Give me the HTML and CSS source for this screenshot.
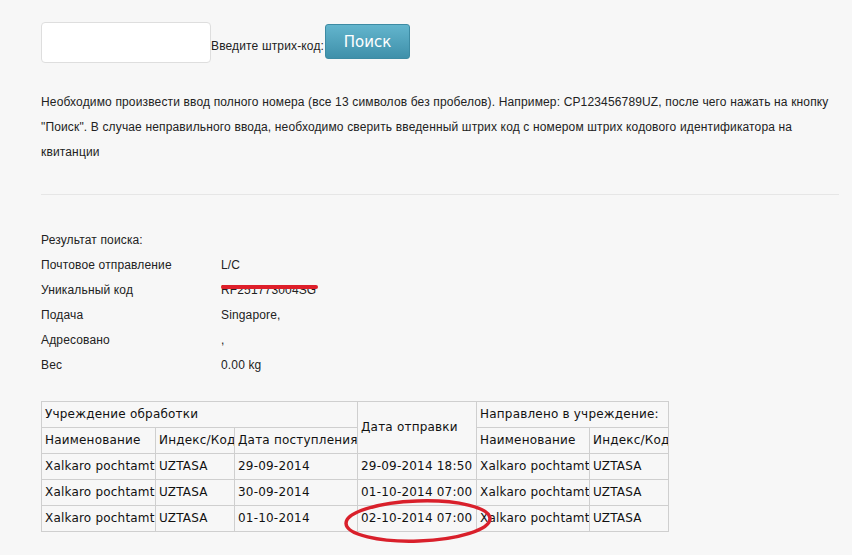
FILE: index.html
```html
<!DOCTYPE html>
<html lang="ru">
<head>
  <meta charset="UTF-8">
  <title>Отслеживание почтовых отправлений</title>
  <link rel="stylesheet" href="styles.css">
</head>
<body>
<div class="page">

  <form class="search-form" onsubmit="return false">
    <input class="barcode-input" type="text">
    <label class="barcode-label">Введите штрих-код:</label>
    <button class="search-btn" type="submit">Поиск</button>
  </form>

  <p class="hint">Необходимо произвести ввод полного номера (все 13 символов без пробелов). Например: CP123456789UZ, после чего нажать на кнопку "Поиск". В случае неправильного ввода, необходимо сверить введенный штрих код с номером штрих кодового идентификатора на квитанции</p>

  <hr class="divider">

  <div class="result">
    <div class="result-title">Результат поиска:</div>
    <div class="result-row">
      <span class="result-label">Почтовое отправление</span>
      <span class="result-value">L/C</span>
    </div>
    <div class="result-row">
      <span class="result-label">Уникальный код</span>
      <span class="result-value marked">RF251773004SG<span class="strike"></span></span>
    </div>
    <div class="result-row">
      <span class="result-label">Подача</span>
      <span class="result-value">Singapore,</span>
    </div>
    <div class="result-row">
      <span class="result-label">Адресовано</span>
      <span class="result-value">,</span>
    </div>
    <div class="result-row">
      <span class="result-label">Вес</span>
      <span class="result-value">0.00 kg</span>
    </div>
  </div>

  <div class="track-wrap">
    <table class="track">
      <colgroup>
        <col class="col-name">
        <col class="col-code">
        <col class="col-date">
        <col class="col-sent">
        <col class="col-name2">
        <col class="col-code">
      </colgroup>
      <tr>
        <td colspan="3">Учреждение обработки</td>
        <td rowspan="2">Дата отправки</td>
        <td colspan="2">Направлено в учреждение:</td>
      </tr>
      <tr>
        <td>Наименование</td>
        <td>Индекс/Код</td>
        <td>Дата поступления</td>
        <td>Наименование</td>
        <td>Индекс/Код</td>
      </tr>
      <tr>
        <td>Xalkaro pochtamt</td>
        <td>UZTASA</td>
        <td>29-09-2014</td>
        <td>29-09-2014 18:50</td>
        <td>Xalkaro pochtamt</td>
        <td>UZTASA</td>
      </tr>
      <tr>
        <td>Xalkaro pochtamt</td>
        <td>UZTASA</td>
        <td>30-09-2014</td>
        <td>01-10-2014 07:00</td>
        <td>Xalkaro pochtamt</td>
        <td>UZTASA</td>
      </tr>
      <tr>
        <td>Xalkaro pochtamt</td>
        <td>UZTASA</td>
        <td>01-10-2014</td>
        <td>02-10-2014 07:00</td>
        <td>Xalkaro pochtamt</td>
        <td>UZTASA</td>
      </tr>
    </table>
    <svg class="circle-mark" width="156" height="50" viewBox="0 0 156 50">
      <ellipse cx="77" cy="24" rx="72" ry="20" transform="rotate(-2 77 24)" fill="none" stroke="#d9202b" stroke-width="3.5"/>
    </svg>
  </div>

</div>
</body>
</html>
```

FILE: styles.css
```css
html, body {
  margin: 0;
  padding: 0;
}

body {
  background-color: #f7f7f7;
  font-family: "Liberation Sans", Arial, sans-serif;
  font-size: 12px;
  letter-spacing: 0.15px;
  color: #222;
}

.page {
  width: 798px;
  padding: 22px 0 0 41px;
}

.search-form {
  display: flex;
  align-items: flex-start;
  height: 41px;
}

.barcode-input {
  box-sizing: border-box;
  width: 170px;
  height: 41px;
  margin: 0;
  border: 1px solid #dedede;
  border-radius: 4px;
  background: #fff;
}

.barcode-label {
  margin: 17px 1px 0 0;
  line-height: 14px;
}

.search-btn {
  box-sizing: border-box;
  width: 85px;
  height: 35px;
  margin-top: 2px;
  border: 1px solid #3d8ba3;
  border-radius: 3px;
  background: linear-gradient(#63b5cd, #3f90aa);
  color: #fff;
  font-family: "DejaVu Sans", Verdana, sans-serif;
  font-size: 15px;
  letter-spacing: 0;
  cursor: pointer;
}

.hint {
  margin: 27px 0 0;
  line-height: 25px;
}

.divider {
  height: 0;
  margin: 29px 0 0;
  border: none;
  border-top: 1px solid #e6e6e6;
}

.result {
  margin-top: 33px;
  line-height: 25px;
}

.result-row {
  display: flex;
}

.result-label {
  width: 180px;
}

.result-value.marked {
  position: relative;
}

.strike {
  position: absolute;
  left: 0;
  top: 7px;
  width: 97px;
  height: 4px;
  border-radius: 2px;
  background: #de1f2a;
}

.track-wrap {
  position: relative;
  margin-top: 23px;
  width: 627px;
  padding-bottom: 24px;
}

.track {
  table-layout: fixed;
  width: 627px;
  border-collapse: collapse;
  font-family: "DejaVu Sans", Verdana, sans-serif;
  font-size: 12px;
  letter-spacing: 0.2px;
  color: #111;
}

.col-name { width: 114px; }
.col-code { width: 79px; }
.col-date { width: 123px; }
.col-sent { width: 119px; }
.col-name2 { width: 113px; }

.track td {
  border: 1px solid #cfcfcf;
  padding: 4px 0 4px 3px;
  line-height: 17px;
  white-space: nowrap;
  overflow: hidden;
}

.circle-mark {
  position: absolute;
  left: 300px;
  top: 96px;
  overflow: visible;
}
```
